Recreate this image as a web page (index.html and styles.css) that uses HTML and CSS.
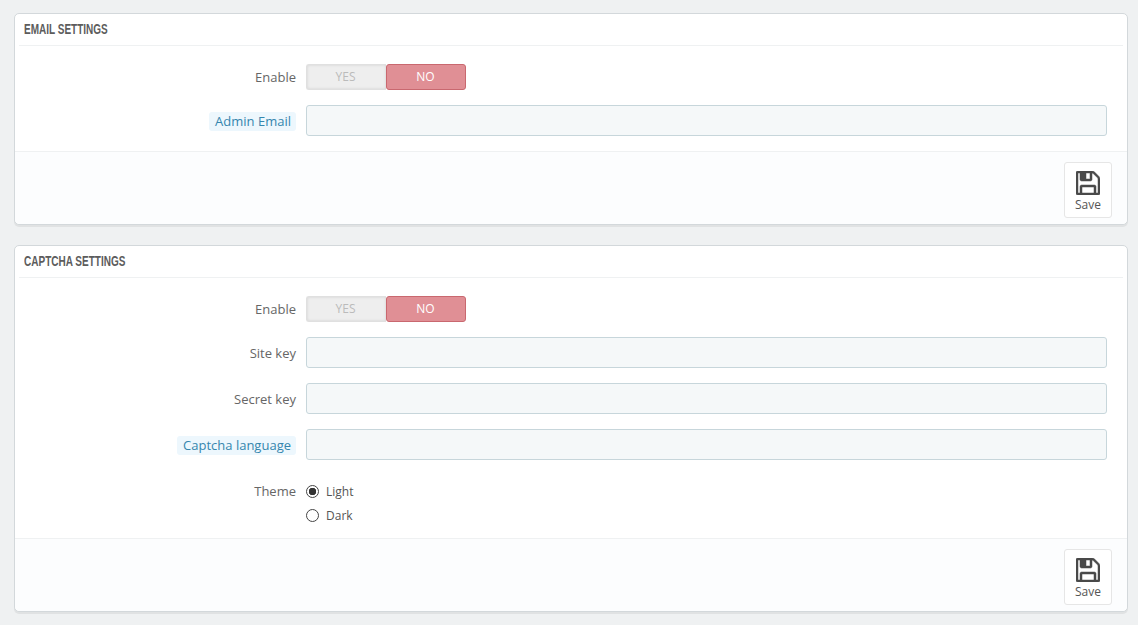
FILE: index.html
```html
<!DOCTYPE html>
<html lang="en">

<head>
    <meta charset="UTF-8">
    <title>Settings</title>
    <link rel="stylesheet" href="styles.css">
</head>

<body>
    <div class="panel">
        <div class="panel-heading"><span class="heading-text">EMAIL SETTINGS</span></div>
        <div class="form-wrapper">
            <div class="form-group">
                <label class="control-label">Enable</label>
                <div class="switch">
                    <span class="switch-yes">YES</span>
                    <span class="switch-no">NO</span>
                </div>
            </div>
            <div class="form-group">
                <label class="control-label"><span class="label-tooltip">Admin Email</span></label>
                <input class="form-input" type="text">
            </div>
        </div>
        <div class="panel-footer">
            <button class="btn-save">
                <svg class="save-icon" width="24" height="24" viewBox="0 128 1536 1536">
                    <path fill="#4a4a4a" stroke="#4a4a4a" stroke-width="32" d="M384 1536h768v-384h-768v384zm896 0h128v-896q0-14-10-38.500t-20-34.500l-281-281q-10-10-34-20t-39-10v416q0 40-28 68t-68 28h-576q-40 0-68-28t-28-68v-416h-128v1280h128v-416q0-40 28-68t68-28h832q40 0 68 28t28 68v416zm-384-928v-320q0-13-9.500-22.500t-22.500-9.500h-192q-13 0-22.500 9.500t-9.500 22.500v320q0 13 9.500 22.500t22.500 9.500h192q13 0 22.500-9.500t9.500-22.500zm640 32v928q0 40-28 68t-68 28h-1344q-40 0-68-28t-28-68v-1344q0-40 28-68t68-28h928q40 0 88 20t76 48l280 280q28 28 48 76t20 88z"/>
                </svg>
                Save
            </button>
        </div>
    </div>

    <div class="panel">
        <div class="panel-heading"><span class="heading-text">CAPTCHA SETTINGS</span></div>
        <div class="form-wrapper">
            <div class="form-group">
                <label class="control-label">Enable</label>
                <div class="switch">
                    <span class="switch-yes">YES</span>
                    <span class="switch-no">NO</span>
                </div>
            </div>
            <div class="form-group">
                <label class="control-label">Site key</label>
                <input class="form-input" type="text">
            </div>
            <div class="form-group">
                <label class="control-label">Secret key</label>
                <input class="form-input" type="text">
            </div>
            <div class="form-group">
                <label class="control-label"><span class="label-tooltip">Captcha language</span></label>
                <input class="form-input" type="text">
            </div>
            <div class="form-group theme-group">
                <label class="control-label">Theme</label>
                <div class="radio-list">
                    <div class="radio-row"><span class="radio checked"></span>Light</div>
                    <div class="radio-row"><span class="radio"></span>Dark</div>
                </div>
            </div>
        </div>
        <div class="panel-footer">
            <button class="btn-save">
                <svg class="save-icon" width="24" height="24" viewBox="0 128 1536 1536">
                    <path fill="#4a4a4a" stroke="#4a4a4a" stroke-width="32" d="M384 1536h768v-384h-768v384zm896 0h128v-896q0-14-10-38.500t-20-34.500l-281-281q-10-10-34-20t-39-10v416q0 40-28 68t-68 28h-576q-40 0-68-28t-28-68v-416h-128v1280h128v-416q0-40 28-68t68-28h832q40 0 68 28t28 68v416zm-384-928v-320q0-13-9.500-22.500t-22.500-9.500h-192q-13 0-22.500 9.500t-9.500 22.500v320q0 13 9.500 22.500t22.500 9.500h192q13 0 22.500-9.500t9.500-22.500zm640 32v928q0 40-28 68t-68 28h-1344q-40 0-68-28t-28-68v-1344q0-40 28-68t68-28h928q40 0 88 20t76 48l280 280q28 28 48 76t20 88z"/>
                </svg>
                Save
            </button>
        </div>
    </div>
</body>

</html>
```

FILE: styles.css
```css
* {
    margin: 0;
    padding: 0;
    box-sizing: border-box;
}

body {
    background: #eff1f2;
    font-family: "Open Sans", sans-serif;
    font-size: 12px;
    color: #666;
    padding: 13px 10px 0 14px;
}

.panel {
    background: #fff;
    border: 1px solid #d3d8db;
    border-radius: 5px;
    box-shadow: 0 2px 0 rgba(0, 0, 0, 0.06);
    margin-bottom: 20px;
}

.panel-heading {
    height: 32px;
    line-height: 31px;
    margin: 0 4px;
    padding-left: 5px;
    border-bottom: 1px solid #eff1f2;
}

/* no condensed family installed, so squeeze the bold sans */
.heading-text {
    display: inline-block;
    transform: scaleX(0.715);
    transform-origin: left center;
    white-space: nowrap;
    font-family: "Liberation Sans", sans-serif;
    font-size: 14px;
    font-weight: bold;
    color: #5c5c5c;
}

.form-wrapper {
    padding: 18px 20px 15px 0;
}

.form-group {
    display: flex;
    align-items: center;
    margin-bottom: 15px;
}

.form-group:last-child {
    margin-bottom: 0;
}

.control-label {
    width: 281px;
    margin-right: 10px;
    text-align: right;
    font-size: 13px;
    color: #666;
}

.label-tooltip {
    display: inline-block;
    height: 19px;
    line-height: 19px;
    margin-top: 1px;
    padding: 0 5px 0 6px;
    border-radius: 3px;
    background: #edf7fd;
    color: #3586ae;
}

.switch {
    display: flex;
    width: 160px;
    height: 26px;
    line-height: 24px;
    text-align: center;
}

.switch-yes {
    width: 80px;
    padding-right: 2px;
    background: #eee;
    border: 1px solid #e0e0e0;
    border-right: 0;
    border-radius: 3px 0 0 3px;
    box-shadow: inset 0 0 3px rgba(0, 0, 0, 0.12);
    color: #bbb;
}

.switch-no {
    width: 80px;
    padding-right: 1px;
    background: #e08f95;
    border: 1px solid #c9686f;
    border-radius: 3px;
    color: #fff;
}

.form-input {
    flex: 1;
    height: 31px;
    background: #f5f8f9;
    border: 1px solid #c7d6db;
    border-radius: 3px;
}

.theme-group {
    align-items: flex-start;
    padding-top: 7px;
    margin-bottom: -1px !important;
}

.radio-list {
    display: flex;
    flex-direction: column;
    gap: 6px;
}

.radio-row {
    display: flex;
    align-items: center;
    height: 18px;
    color: #555;
}

.radio {
    width: 13px;
    height: 13px;
    margin-right: 7px;
    border: 1px solid #444;
    border-radius: 50%;
    background: #fff;
}

.radio.checked {
    background: radial-gradient(circle, #333 0, #333 3.5px, #fff 4px);
}

.panel-footer {
    display: flex;
    justify-content: flex-end;
    height: 73px;
    padding: 10px 15px 0 0;
    background: #fcfdfe;
    border-top: 1px solid #eff1f2;
    border-radius: 0 0 5px 5px;
}

.btn-save {
    display: flex;
    flex-direction: column;
    align-items: center;
    width: 48px;
    height: 56px;
    padding-top: 8px;
    background: #fff;
    border: 1px solid #e6e6e6;
    border-radius: 3px;
    font-family: "Open Sans", sans-serif;
    font-size: 12px;
    line-height: 16px;
    color: #555;
}

.save-icon {
    margin-bottom: 2px;
}
```
